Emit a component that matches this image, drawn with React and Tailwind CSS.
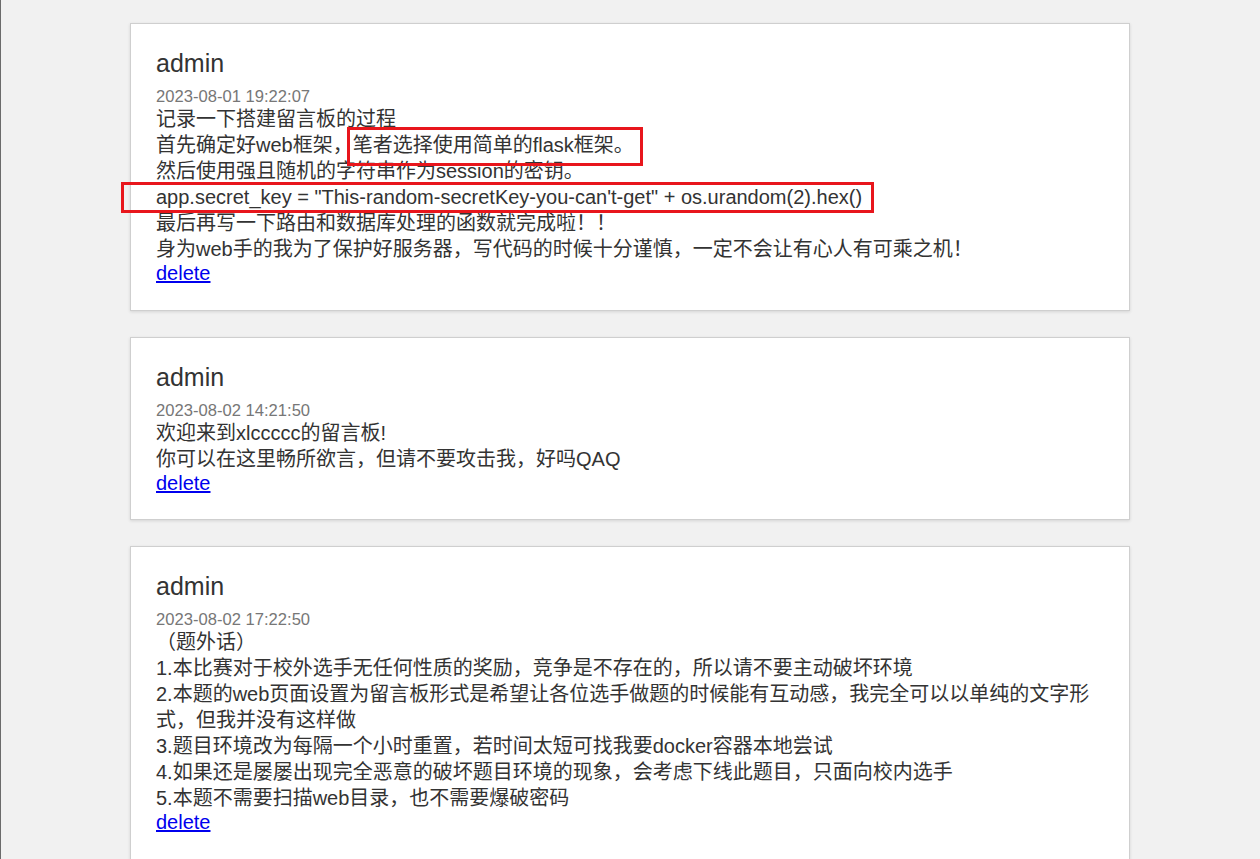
import React from "react";

const font = { fontFamily: '"Liberation Sans", Arial, "Noto Sans CJK SC", sans-serif' };

function Card({ date, lines, children }) {
  return (
    <div className="relative w-[1000px] mx-auto bg-white border border-[#cfcfcf] shadow-[0_1px_3px_rgba(0,0,0,0.12)] px-[25px] pt-[25px] pb-[25.5px]">
      <div className="text-[25px] leading-[28px] text-[#333]">admin</div>
      <div className="mt-[11px] text-[16.6px] leading-[18px] text-[#777]">{date}</div>
      <div className="text-[20px] text-[#333]">
        {lines.map((l, i) => (
          <div key={i} className="leading-[26px]">{l}</div>
        ))}
      </div>
      <a href="#" className="block w-fit text-[20px] leading-[22px] text-[#0000ee] underline">delete</a>
      {children}
    </div>
  );
}

export default function App() {
  return (
    <div className="min-h-[859px] bg-[#f1f1f1] border-l border-[#6b6b6b] pr-[1px] pt-[23px] pb-[20px] flex flex-col gap-[26px]" style={font}>
      <Card
        date="2023-08-01 19:22:07"
        lines={[
          "记录一下搭建留言板的过程",
          "首先确定好web框架，笔者选择使用简单的flask框架。",
          "然后使用强且随机的字符串作为session的密钥。",
          "app.secret_key = \"This-random-secretKey-you-can't-get\" + os.urandom(2).hex()",
          "最后再写一下路由和数据库处理的函数就完成啦！！",
          "身为web手的我为了保护好服务器，写代码的时候十分谨慎，一定不会让有心人有可乘之机！",
        ]}
      >
        <div className="absolute left-[216px] top-[103px] w-[296px] h-[39px] border-[3px] border-[#e8161c]" />
        <div className="absolute left-[-10px] top-[158px] w-[753px] h-[31px] border-[3px] border-[#e8161c]" />
      </Card>
      <Card
        date="2023-08-02 14:21:50"
        lines={["欢迎来到xlccccc的留言板!", "你可以在这里畅所欲言，但请不要攻击我，好吗QAQ"]}
      />
      <Card
        date="2023-08-02 17:22:50"
        lines={[
          "（题外话）",
          "1.本比赛对于校外选手无任何性质的奖励，竞争是不存在的，所以请不要主动破坏环境",
          "2.本题的web页面设置为留言板形式是希望让各位选手做题的时候能有互动感，我完全可以以单纯的文字形式，但我并没有这样做",
          "3.题目环境改为每隔一个小时重置，若时间太短可找我要docker容器本地尝试",
          "4.如果还是屡屡出现完全恶意的破坏题目环境的现象，会考虑下线此题目，只面向校内选手",
          "5.本题不需要扫描web目录，也不需要爆破密码",
        ]}
      />
    </div>
  );
}
